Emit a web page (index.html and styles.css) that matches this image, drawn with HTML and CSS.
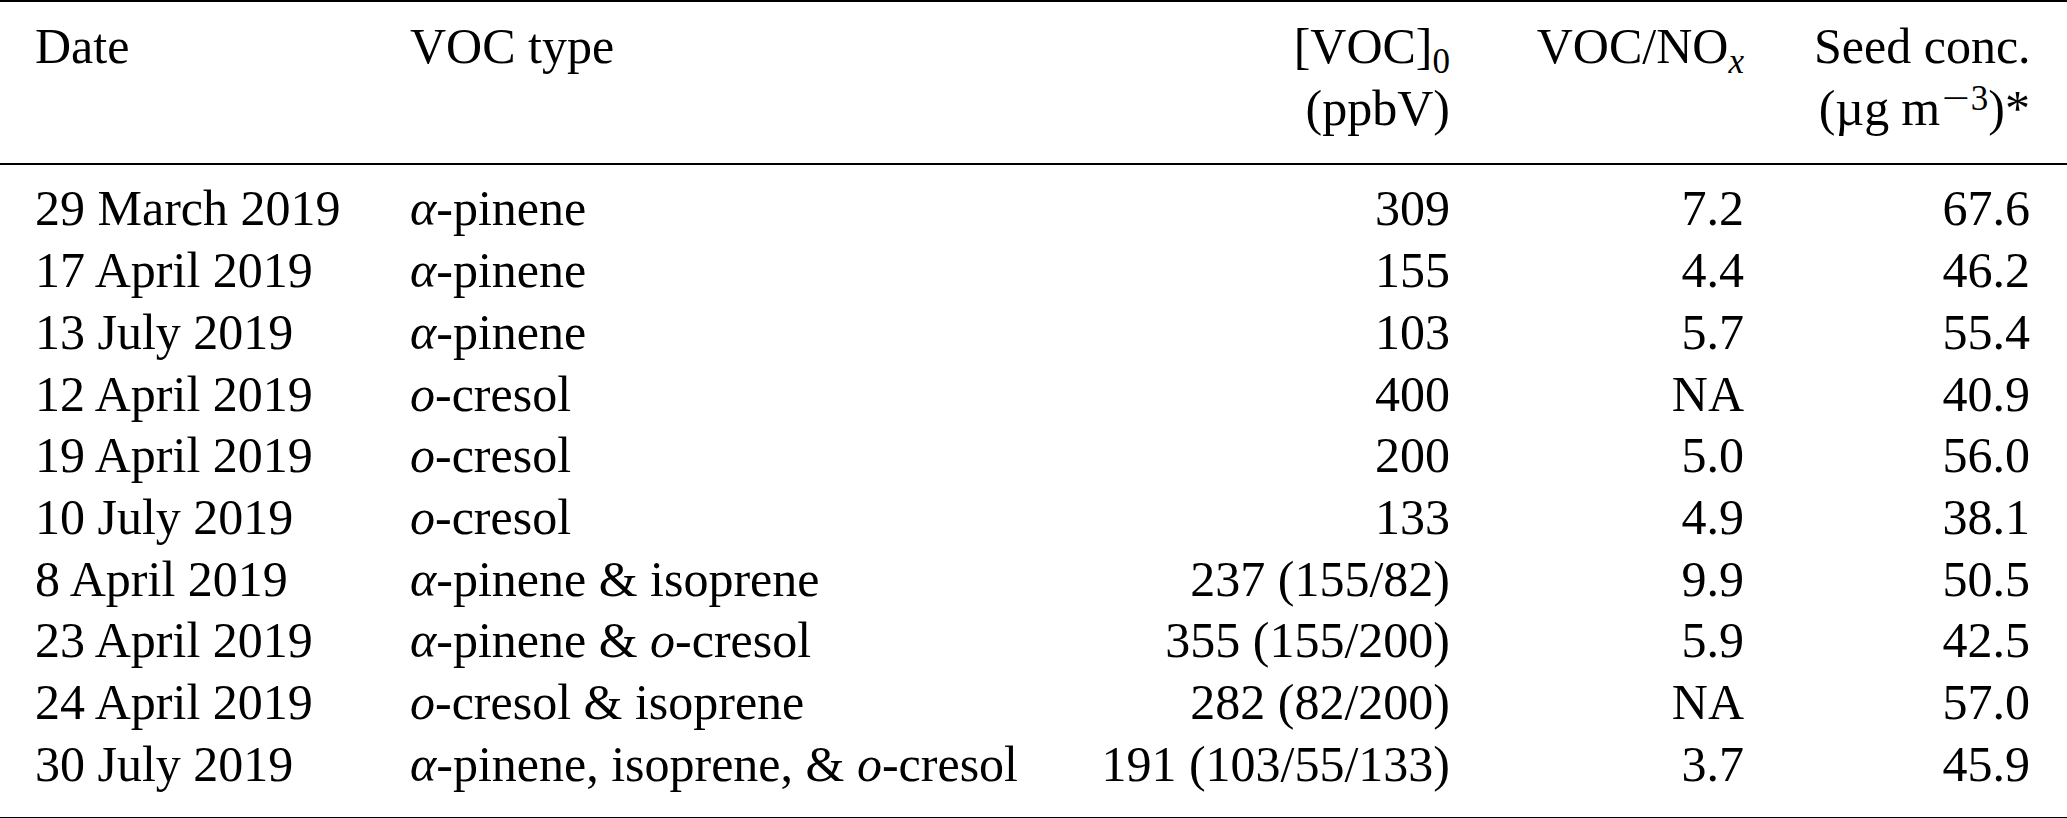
FILE: index.html
```html
<!DOCTYPE html>
<html lang="en">
<head>
<meta charset="utf-8">
<title>VOC experiments</title>
<link rel="stylesheet" href="styles.css">
</head>
<body>
<table class="data">
  <colgroup>
    <col class="c1"><col class="c2"><col class="c3"><col class="c4"><col class="c5">
  </colgroup>
  <thead>
    <tr>
      <th class="l">Date</th>
      <th class="l">VOC type</th>
      <th class="r">[VOC]<sub class="sb">0</sub><br>(ppbV)</th>
      <th class="r">VOC/NO<sub class="sb"><i>x</i></sub></th>
      <th class="r">Seed conc.<br>(µg<span class="thin"></span>m<sup class="sp"><span class="minus">&minus;</span>3</sup>)*</th>
    </tr>
  </thead>
  <tbody>
    <tr><td class="l">29 March 2019</td><td class="l"><i>α</i>-pinene</td><td class="r">309</td><td class="r">7.2</td><td class="r">67.6</td></tr>
    <tr><td class="l">17 April 2019</td><td class="l"><i>α</i>-pinene</td><td class="r">155</td><td class="r">4.4</td><td class="r">46.2</td></tr>
    <tr><td class="l">13 July 2019</td><td class="l"><i>α</i>-pinene</td><td class="r">103</td><td class="r">5.7</td><td class="r">55.4</td></tr>
    <tr><td class="l">12 April 2019</td><td class="l"><i>o</i>-cresol</td><td class="r">400</td><td class="r">NA</td><td class="r">40.9</td></tr>
    <tr><td class="l">19 April 2019</td><td class="l"><i>o</i>-cresol</td><td class="r">200</td><td class="r">5.0</td><td class="r">56.0</td></tr>
    <tr><td class="l">10 July 2019</td><td class="l"><i>o</i>-cresol</td><td class="r">133</td><td class="r">4.9</td><td class="r">38.1</td></tr>
    <tr><td class="l">8 April 2019</td><td class="l"><i>α</i>-pinene &amp; isoprene</td><td class="r">237 (155/82)</td><td class="r">9.9</td><td class="r">50.5</td></tr>
    <tr><td class="l">23 April 2019</td><td class="l"><i>α</i>-pinene &amp; <i>o</i>-cresol</td><td class="r">355 (155/200)</td><td class="r">5.9</td><td class="r">42.5</td></tr>
    <tr><td class="l">24 April 2019</td><td class="l"><i>o</i>-cresol &amp; isoprene</td><td class="r">282 (82/200)</td><td class="r">NA</td><td class="r">57.0</td></tr>
    <tr><td class="l">30 July 2019</td><td class="l"><i>α</i>-pinene, isoprene, &amp; <i>o</i>-cresol</td><td class="r">191 (103/55/133)</td><td class="r">3.7</td><td class="r">45.9</td></tr>
  </tbody>
</table>
</body>
</html>
```

FILE: styles.css
```css
html, body {
  margin: 0;
  padding: 0;
  background: #ffffff;
}

body {
  font-family: "Liberation Serif", "Times New Roman", serif;
  font-size: 50px;
  color: #000000;
  overflow: hidden;
}

.data {
  width: 2067px;
  border-collapse: collapse;
  table-layout: fixed;
  border-top: 2px solid #000;
  border-bottom: 3px solid #000;
}

.c1 { width: 375px; }
.c2 { width: 690px; }
.c3 { width: 420px; }
.c4 { width: 294px; }
.c5 { width: 288px; }

.data th,
.data td {
  font-weight: normal;
  line-height: 61.7px;
  padding: 0 35px;
  white-space: nowrap;
  vertical-align: top;
}

.data th:last-child,
.data td:last-child {
  padding-right: 37px;
}

.data thead th {
  padding-top: 14px;
  padding-bottom: 24px;
  border-bottom: 2.5px solid #000;
}

.data tbody tr:first-child td {
  padding-top: 13px;
}

.data tbody tr:last-child td {
  padding-bottom: 22px;
}

.l { text-align: left; }
.r { text-align: right; }

i { font-style: italic; }

.sb {
  font-size: 70%;
  line-height: 0;
  vertical-align: -0.28em;
}

.sp {
  font-size: 70%;
  line-height: 0;
  vertical-align: 0.42em;
  margin-left: 2px;
}

.thin {
  display: inline-block;
  width: 12px;
}

.minus {
  display: inline-block;
  margin: 0 5px 0 4px;
  transform: scaleX(1.4);
}
```
